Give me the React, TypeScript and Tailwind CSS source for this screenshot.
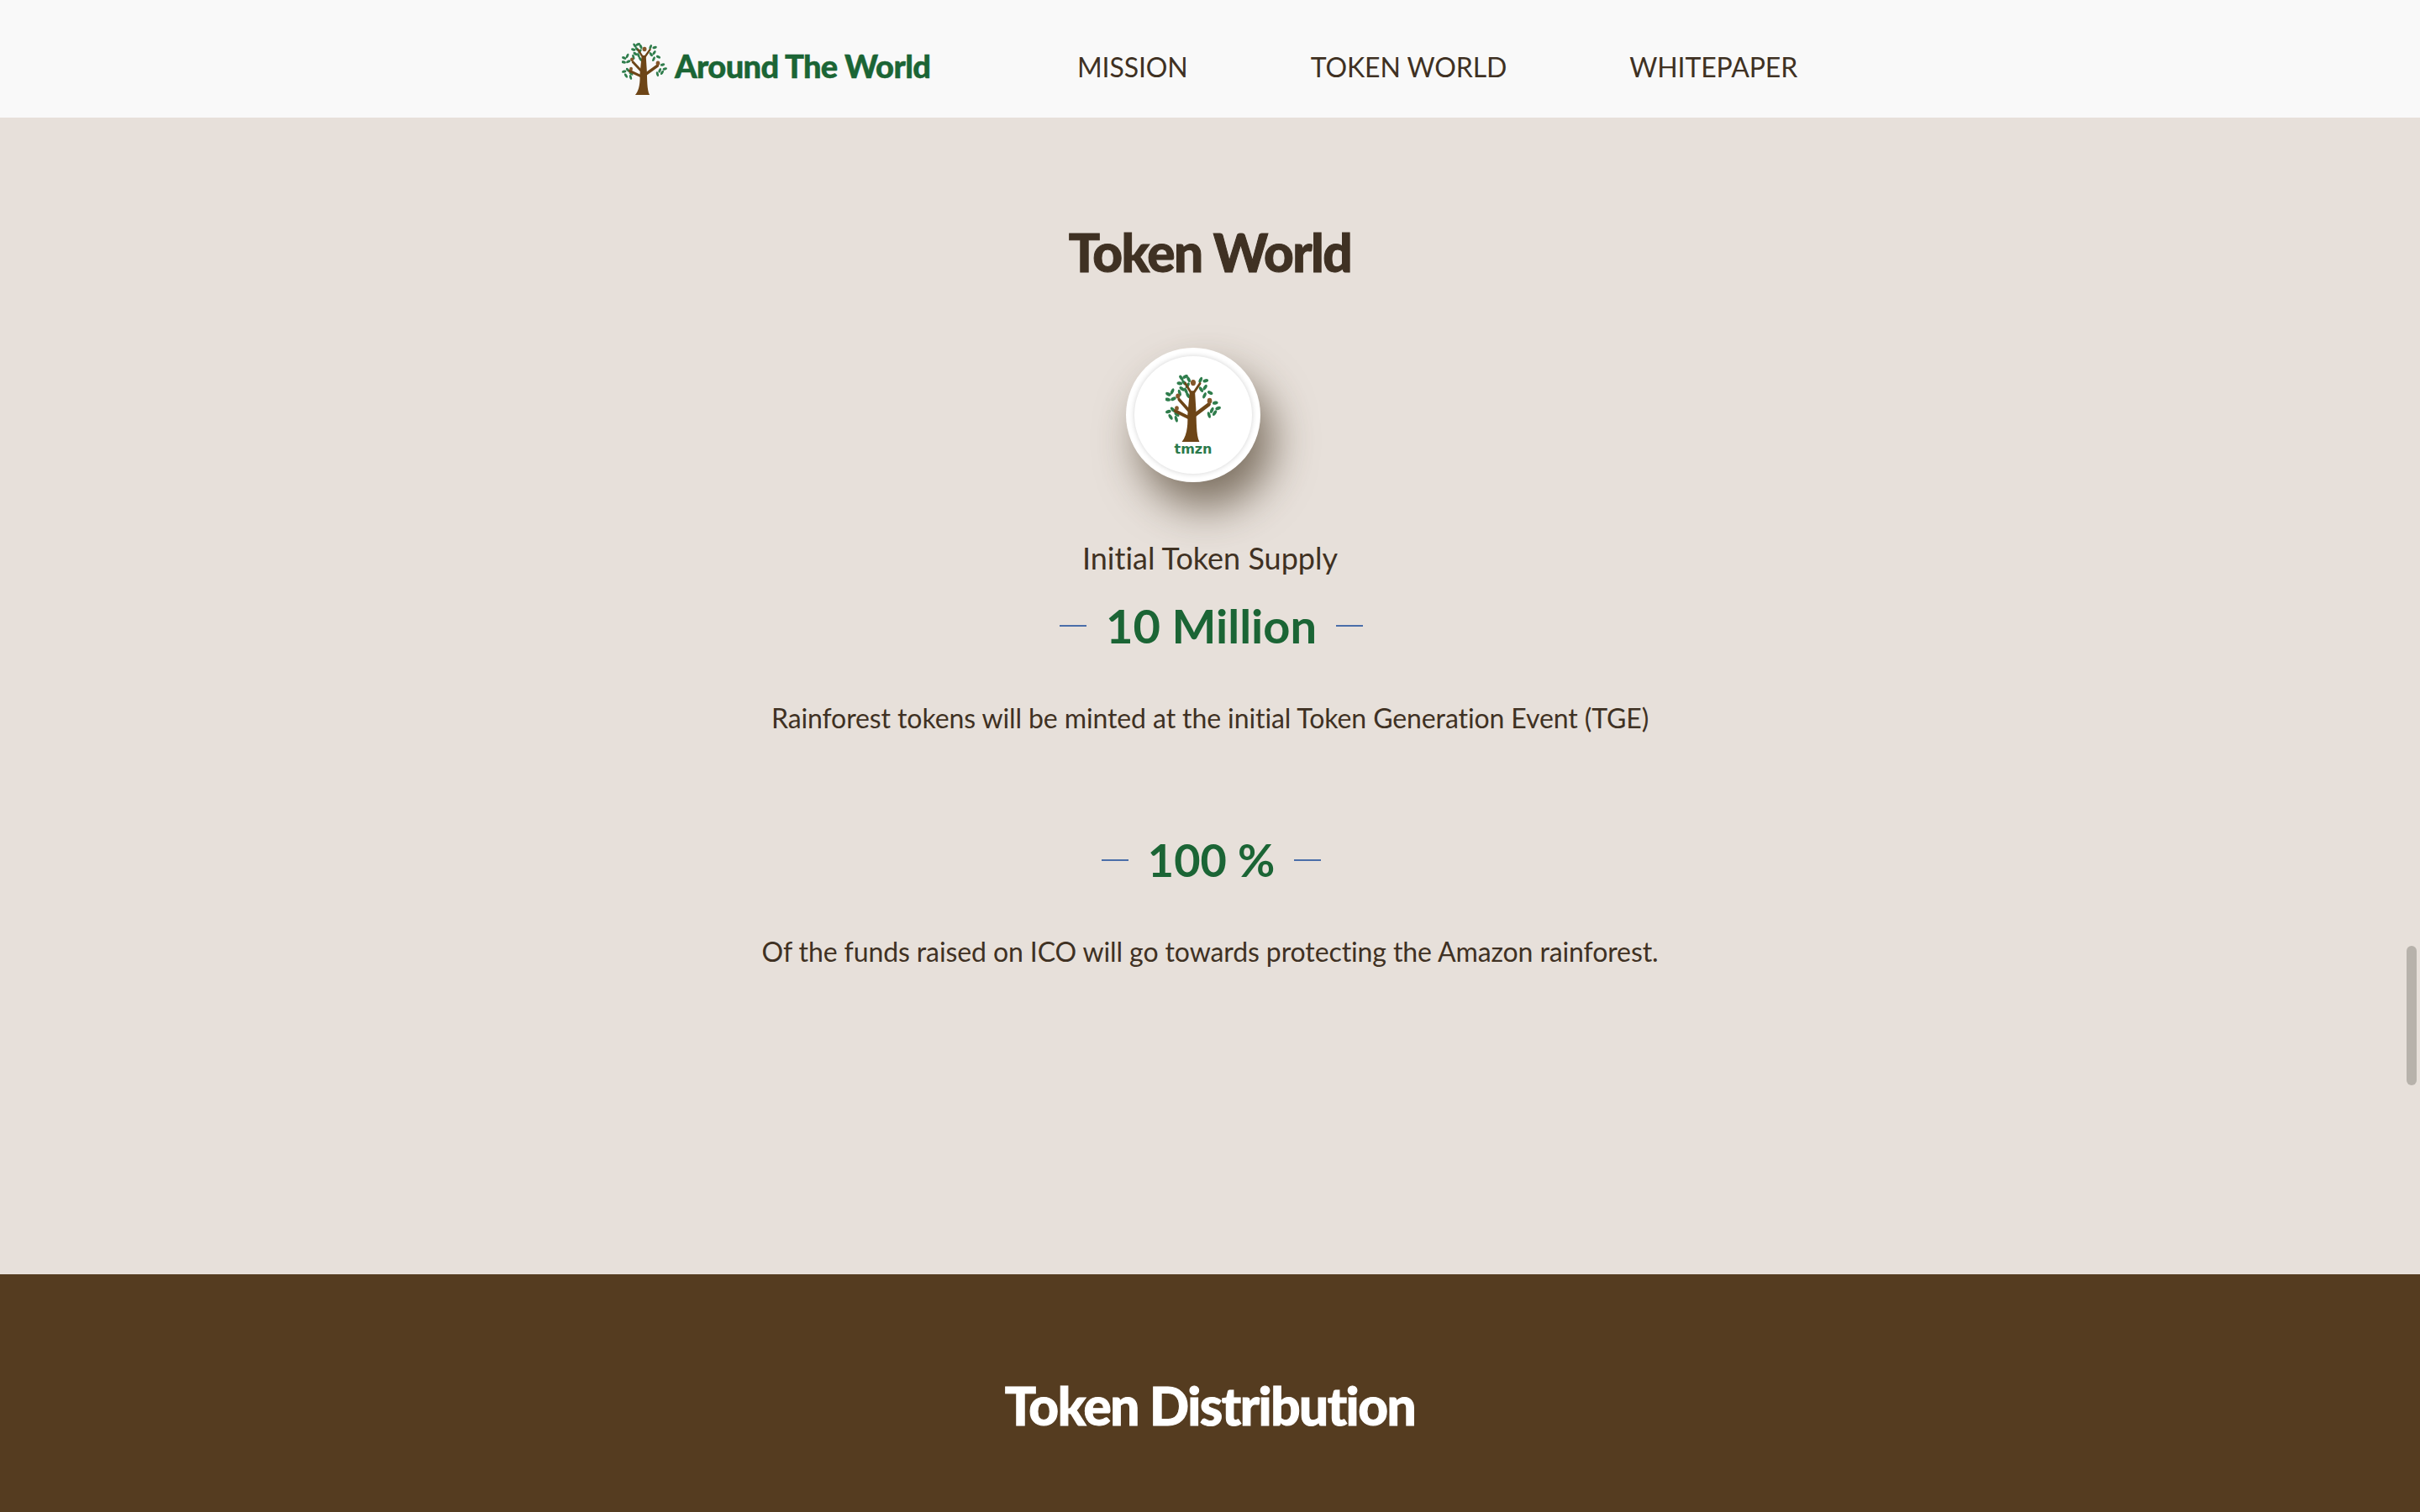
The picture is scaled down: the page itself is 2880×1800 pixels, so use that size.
const Tree = ({ className }: { className: string }) => {
  // leaf clusters around the crown: [x, y, rotation]
  const leaves = [
    [28, 5, 50], [35, 3, -20], [41, 7, 60], [25, 13, 10], [33, 12, 40], [39, 16, -50], [29, 21, 30], [36, 24, 60], [40, 31, 50],
    [62, 8, -60], [71, 9, -10], [63, 22, 50], [70, 19, -50], [79, 27, 20], [69, 31, -60],
    [12, 25, -60], [5, 29, 20], [4, 37, 10], [14, 36, -20], [25, 27, 70],
    [5, 55, -10], [13, 52, 40], [9, 63, 50], [19, 66, 70], [20, 59, 30],
    [88, 42, -10], [93, 50, -15], [82, 53, -60], [87, 57, -50], [77, 60, 70],
  ];
  return (
    <svg viewBox="0 0 98 100" preserveAspectRatio="none" className={className}>
      {leaves.map(([x, y, r], i) => (
        <ellipse key={i} cx={x} cy={y} rx="5" ry="2.6" fill="#2f7d4c" transform={`rotate(${r} ${x} ${y})`} />
      ))}
      <g fill="none" stroke="#6d4517" strokeLinecap="round">
        <path d="M41 64L17 54" strokeWidth="5" />
        <path d="M42 54L24 37" strokeWidth="5" />
        <path d="M52 60L77 44" strokeWidth="6" />
        <path d="M46 28L35 13" strokeWidth="4" />
        <path d="M49 28L61 13" strokeWidth="4" />
      </g>
      <path d="M29 100C37 92 40 78 39 60L43 24L52 24L54 52C55 70 54 90 60 100Z" fill="#6d4517" />
      <circle cx="49" cy="12" r="4.5" fill="#85572a" />
      <circle cx="22" cy="32" r="3.8" fill="#85572a" />
      <circle cx="78" cy="39" r="4.2" fill="#85572a" />
      <circle cx="20" cy="50" r="3.5" fill="#85572a" />
    </svg>
  );
};

const Stat = ({ value, size }: { value: string; size: string }) => (
  <div className="flex items-center justify-center gap-[23px] pl-[3px]">
    <span className="h-[2px] w-[32px] bg-[#4a6ea9]" />
    <span className={`font-bold whitespace-nowrap text-[#1b6535] ${size}`}>{value}</span>
    <span className="h-[2px] w-[32px] bg-[#4a6ea9]" />
  </div>
);

export default function App() {
  return (
    <div className="relative flex h-[1800px] flex-col overflow-hidden bg-[#e7e0da] font-['Lato',sans-serif] text-[#3f3123] [font-variant-ligatures:none]">
      <header className="flex h-[140px] shrink-0 items-center justify-center bg-[#f9f9f9] pt-[20px]">
        <div className="flex w-[1404px] items-center">
          <div className="flex w-[544px] items-center gap-[9px] pl-[2px]">
            <Tree className="mt-[4px] h-[62px] w-[54px]" />
            <span className="-mt-[4px] text-[38px] font-black tracking-[-0.6px] whitespace-nowrap text-[#1b6535] [-webkit-text-stroke:0.5px_#1b6535]">
              Around The World
            </span>
          </div>
          <nav className="flex gap-[146px] text-[32px] tracking-[-0.1px] whitespace-nowrap text-[#3f3123]">
            <a>MISSION</a>
            <a>TOKEN WORLD</a>
            <a>WHITEPAPER</a>
          </nav>
        </div>
      </header>

      <main className="flex flex-1 flex-col items-center bg-[#e7e0da] pt-[122px]">
        <h2 className="text-[62px] leading-[76px] font-black tracking-[-1.5px] text-[#3f3123] [-webkit-text-stroke:1px_#3f3123]">
          Token World
        </h2>
        <div className="mt-[76px] mr-[40px] flex h-[160px] w-[160px] flex-col items-center justify-center rounded-full bg-white shadow-[15px_30px_50px_rgba(70,55,35,0.65)]">
          <div className="flex h-[140px] w-[140px] flex-col items-center justify-center rounded-full shadow-[0_0_6px_rgba(0,0,0,0.18)]">
            <Tree className="h-[80px] w-[66px]" />
            <span className="mt-[1px] font-['DejaVu_Sans',sans-serif] text-[16px] leading-[16px] font-bold text-[#2b7a4b]">
              tmzn
            </span>
          </div>
        </div>
        <p className="mt-[68px] text-[36px] leading-[44px]">Initial Token Supply</p>
        <div className="mt-[25px]">
          <Stat value="10 Million" size="text-[56px] leading-[68px]" />
        </div>
        <p className="mt-[56px] text-[32px] leading-[40px] tracking-[-0.1px]">
          Rainforest tokens will be minted at the initial Token Generation Event (TGE)
        </p>
        <div className="mt-[119px]">
          <Stat value="100 %" size="text-[54px] leading-[60px]" />
        </div>
        <p className="mt-[59px] text-[32px] leading-[40px] tracking-[-0.1px]">
          Of the funds raised on ICO will go towards protecting the Amazon rainforest.
        </p>
      </main>

      <section className="flex h-[283px] shrink-0 justify-center bg-[#553c20] pt-[118px]">
        <h2 className="text-[62px] leading-[76px] font-black tracking-[-1.5px] text-white [-webkit-text-stroke:1px_#fff]">
          Token Distribution
        </h2>
      </section>

      {/* overlay scrollbar thumb */}
      <div className="absolute top-[1126px] right-[4px] h-[166px] w-[12px] rounded-full bg-[#b7b2ab]" />
    </div>
  );
}
